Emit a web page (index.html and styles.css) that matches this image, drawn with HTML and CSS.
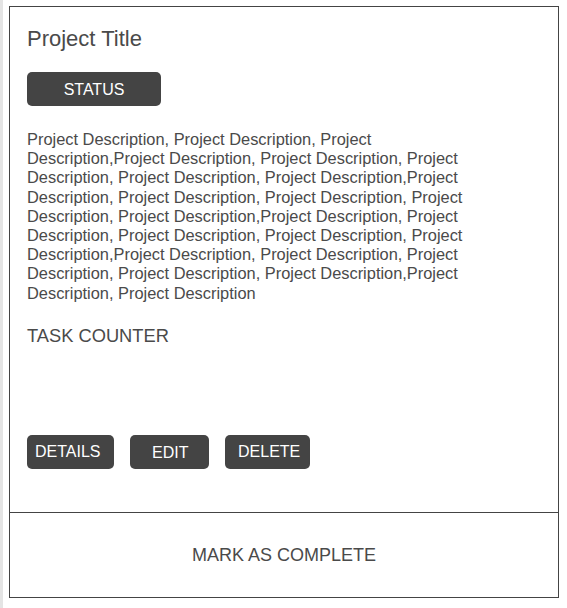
FILE: index.html
```html
<!DOCTYPE html>
<html>
<head>
<meta charset="utf-8">
<link rel="stylesheet" href="styles.css">
</head>
<body>
<div class="page">
  <div class="card">
    <div class="card-main">
      <h1 class="title">Project Title</h1>
      <div class="status">STATUS</div>
      <p class="desc">Project Description, Project Description, Project
Description,Project Description, Project Description, Project
Description, Project Description, Project Description,Project
Description, Project Description, Project Description, Project
Description, Project Description,Project Description, Project
Description, Project Description, Project Description, Project
Description,Project Description, Project Description, Project
Description, Project Description, Project Description,Project
Description, Project Description</p>
      <div class="counter">TASK COUNTER</div>
      <div class="actions">
        <button class="btn btn-details">DETAILS</button>
        <button class="btn btn-edit">EDIT</button>
        <button class="btn btn-delete">DELETE</button>
      </div>
    </div>
    <div class="card-foot">MARK AS COMPLETE</div>
  </div>
</div>
</body>
</html>
```
FILE: styles.css
```css
html, body {
  margin: 0;
  padding: 0;
  background: #fff;
}
body {
  font-family: "Liberation Sans", Arial, sans-serif;
  color: #4a4a4a;
  border-left: 3px solid #e4e4e4;
  min-height: 608px;
  box-sizing: border-box;
}
.page {
  padding: 6px 0 0 6px;
}
.card {
  width: 550px;
  height: 592px;
  box-sizing: border-box;
  border: 1px solid #444;
  display: flex;
  flex-direction: column;
}
.card-main {
  height: 506px;
  box-sizing: border-box;
  padding: 19px 17px 43px 17px;
  border-bottom: 1px solid #444;
  display: flex;
  flex-direction: column;
  align-items: flex-start;
}
.title {
  margin: 0;
  font-size: 22px;
  font-weight: normal;
  line-height: 26px;
}
.status {
  margin-top: 20px;
  width: 134px;
  height: 34px;
  box-sizing: border-box;
  padding-top: 2px;
  background: #444;
  color: #fff;
  border-radius: 5px;
  font-size: 16px;
  display: flex;
  align-items: center;
  justify-content: center;
}
.desc {
  margin: 24px 0 0 0;
  width: 475px;
  font-size: 16.4px;
  line-height: 19.2px;
}
.counter {
  margin-top: 22px;
  font-size: 18.3px;
  line-height: 22px;
}
.actions {
  margin-top: auto;
  display: flex;
  gap: 16px;
}
.btn {
  height: 34px;
  border: 0;
  border-radius: 5px;
  background: #444;
  color: #fff;
  font-family: "Liberation Sans", Arial, sans-serif;
  font-size: 16px;
  padding: 0;
  box-sizing: border-box;
  text-align: left;
}
.btn-details {
  width: 87px;
  padding: 0 0 0 8px;
}
.btn-edit {
  width: 79px;
  padding: 2px 0 0 22px;
}
.btn-delete {
  width: 85px;
  padding: 0 0 0 13px;
}
.card-foot {
  flex: 1;
  display: flex;
  align-items: center;
  justify-content: center;
  font-size: 18px;
}
```
